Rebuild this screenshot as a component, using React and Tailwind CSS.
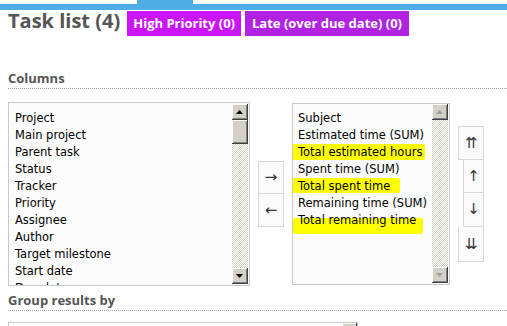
import React from 'react';

const leftItems = [
    'Project', 'Main project', 'Parent task', 'Status', 'Tracker', 'Priority',
    'Assignee', 'Author', 'Target milestone', 'Start date', 'Due date',
];

// hl: position of the yellow marker stroke behind the row
const rightItems = [
    { label: 'Subject' },
    { label: 'Estimated time (SUM)' },
    { label: 'Total estimated hours', hl: 'left-[-6px] w-[133px] top-[0px] h-[16px]' },
    { label: 'Spent time (SUM)' },
    { label: 'Total spent time', hl: 'left-[-6px] w-[108px] top-[0px] h-[15px]' },
    { label: 'Remaining time (SUM)' },
    { label: 'Total remaining time', hl: 'left-[-5px] w-[130px] top-[6px] h-[16px]' },
];

const Arrow = ({ dir, muted }) => (
    <svg width="7" height="4" viewBox="0 0 7 4" className={muted ? 'fill-[#a0a0a0]' : 'fill-black'}>
        {dir === 'up' ? <polygon points="3.5,0 7,4 0,4" /> : <polygon points="0,0 7,0 3.5,4" />}
    </svg>
);

const ScrollBtn = ({ dir, muted }) => (
    <div className="w-[16px] h-[16px] bg-[#d4d0c8] border-r border-b border-[#404040] shadow-[inset_1px_1px_#fff,inset_-1px_-1px_#808080] flex items-center justify-center">
        <Arrow dir={dir} muted={muted} />
    </div>
);

const Track = ({ className = '' }) => (
    <div className={`bg-[repeating-conic-gradient(#d4d0c8_0_25%,#ffffff_0_50%)] bg-[length:2px_2px] ${className}`} />
);

const MoveBtn = ({ children, className = '' }) => (
    <button className={`flex items-center justify-center bg-[#fbfbfb] border border-[#d6d6d6] text-[#333] text-[15px] leading-none ${className}`}>
        {children}
    </button>
);

const Legend = ({ children, className = '' }) => (
    <div className={`font-['Open_Sans',sans-serif] font-bold text-[13px] leading-[16px] text-[#555] pb-[2px] border-b border-dotted border-[#a8a8a8] ${className}`}>
        {children}
    </div>
);

export default function App() {
    return (
        <div className="w-[507px] h-[326px] overflow-hidden bg-white font-['DejaVu_Sans',sans-serif]">
            {/* top bar */}
            <div className="ml-[137px] w-[56px] h-[4px] bg-[#50ade3]" />
            <div className="h-[6px] bg-[#50ade3]" />

            <div className="pl-2">
                {/* title row */}
                <div className="flex items-start mt-[1px]">
                    <h1 className="font-['Open_Sans',sans-serif] font-bold text-[20px] leading-[20px] text-[#555] mr-[7px]">Task list (4)</h1>
                    <span className="h-[25px] px-[6px] bg-[#cc15f6] text-white font-['Open_Sans',sans-serif] font-bold text-[13px] leading-[25px]">High Priority (0)</span>
                    <span className="ml-[4px] h-[25px] px-[7px] bg-[#b222e2] text-white font-['Open_Sans',sans-serif] font-bold text-[13px] leading-[25px]">Late (over due date) (0)</span>
                </div>

                <Legend className="mt-[34px]">Columns</Legend>

                {/* column pickers */}
                <div className="flex items-center mt-[13px]">
                    <div className="w-[242px] h-[184px] border border-[#c8c8c8] bg-[#fcfcfc] flex overflow-hidden">
                        <ul className="flex-1 h-full overflow-hidden pl-[6px] pt-[7px] text-[11.5px] leading-[17px] text-black">
                            {leftItems.map((t) => <li key={t}>{t}</li>)}
                        </ul>
                        <div className="w-[17px] flex flex-col pt-[1px] pb-[1px] pr-[1px]">
                            <ScrollBtn dir="up" />
                            <div className="w-[16px] h-[24px] bg-[#d4d0c8] border-r border-b border-[#404040] shadow-[inset_1px_1px_#fff,inset_-1px_-1px_#808080]" />
                            <Track className="flex-1 w-[16px]" />
                            <ScrollBtn dir="down" />
                        </div>
                    </div>

                    <div className="flex flex-col ml-[8px]">
                        <MoveBtn className="w-[26px] h-[33px]">→</MoveBtn>
                        <MoveBtn className="w-[26px] h-[33px] border-t-0">←</MoveBtn>
                    </div>

                    <div className="ml-[8px] w-[158px] h-[182px] border border-[#c8c8c8] bg-[#fcfcfc] flex overflow-hidden">
                        <ul className="flex-1 pl-[5px] pt-[6px] text-[11.5px] leading-[17px] text-black">
                            {rightItems.map((it) => (
                                <li key={it.label} className="relative whitespace-nowrap">
                                    {it.hl && <span className={`absolute bg-[#ffff00] rounded-[2px] ${it.hl}`} />}
                                    <span className="relative">{it.label}</span>
                                </li>
                            ))}
                        </ul>
                        <div className="w-[17px] flex flex-col pb-[1px] pr-[1px]">
                            <ScrollBtn dir="up" muted />
                            <Track className="flex-1 w-[16px]" />
                            <ScrollBtn dir="down" muted />
                        </div>
                    </div>

                    <div className="ml-[8px] flex flex-col items-end">
                        <MoveBtn className="w-[26px] h-[34px]">⇈</MoveBtn>
                        <MoveBtn className="w-[21px] h-[33px] border-t-0">↑</MoveBtn>
                        <MoveBtn className="w-[21px] h-[34px] border-t-0">↓</MoveBtn>
                        <MoveBtn className="w-[26px] h-[35px] border-t-0">⇊</MoveBtn>
                    </div>
                </div>

                <Legend className="mt-[6px]">Group results by</Legend>

                <div className="mt-[11px] w-[350px] h-[20px] border border-[#c8c8c8] bg-white flex justify-end">
                    <div className="w-[15px] h-full bg-[#d4d0c8] border-r border-[#404040] shadow-[inset_1px_1px_#fff]" />
                </div>
            </div>
        </div>
    );
}
